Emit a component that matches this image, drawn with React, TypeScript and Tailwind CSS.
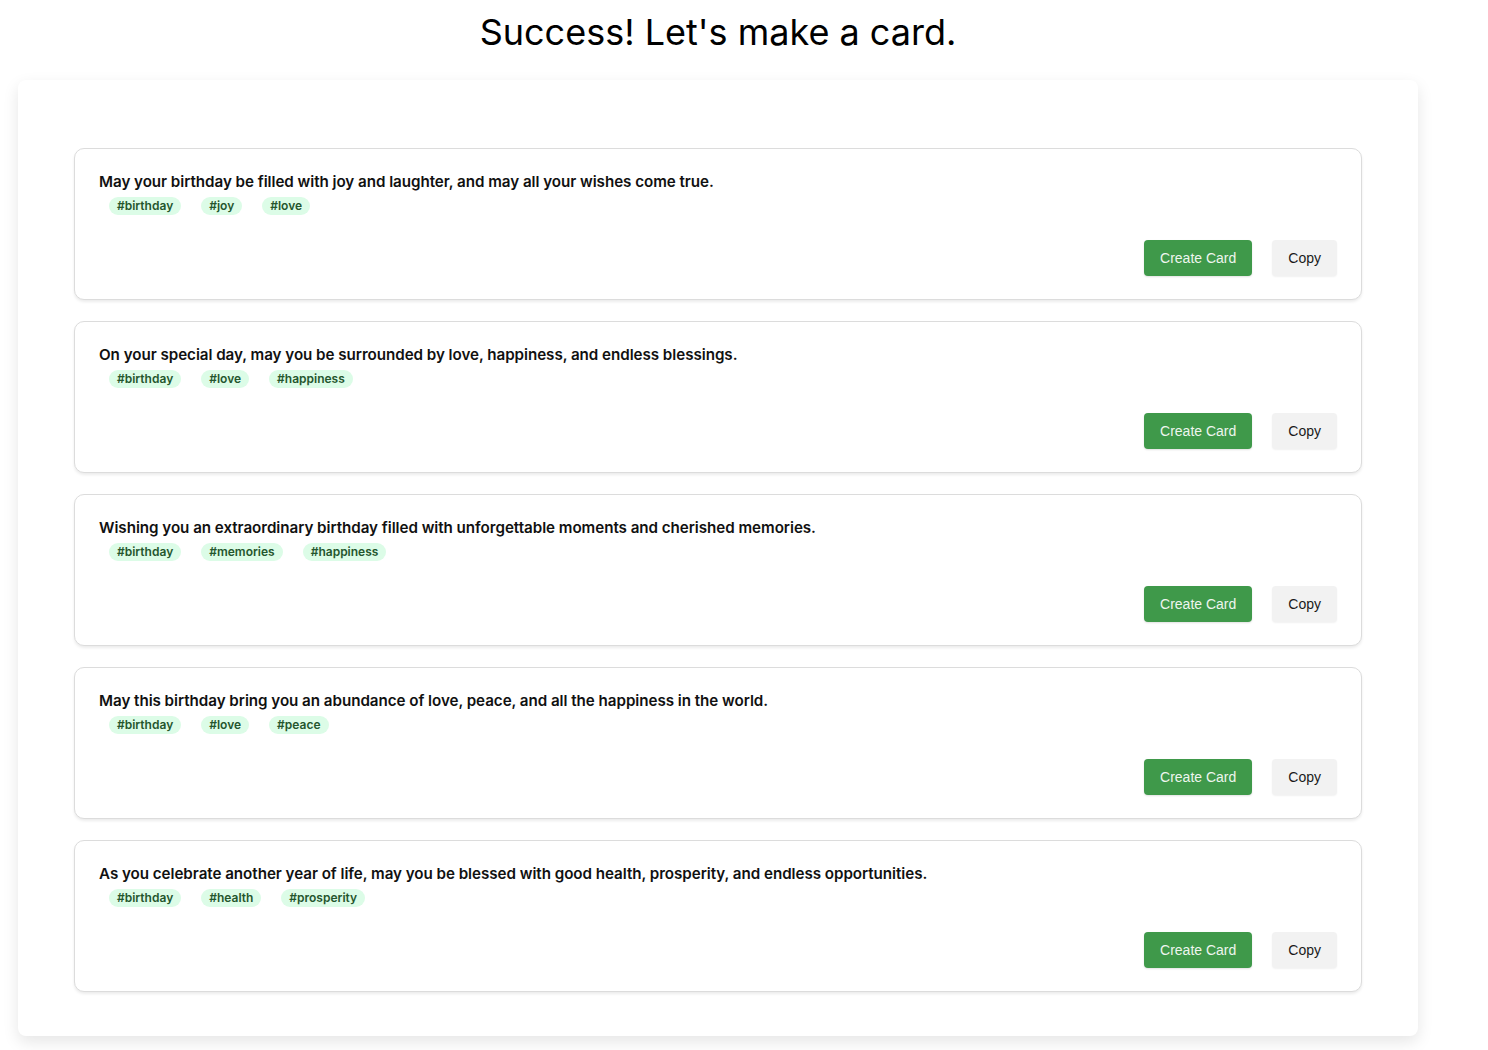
import React from 'react';

type Wish = { text: string; tags: string[] };

const wishes: Wish[] = [
  { text: 'May your birthday be filled with joy and laughter, and may all your wishes come true.', tags: ['birthday', 'joy', 'love'] },
  { text: 'On your special day, may you be surrounded by love, happiness, and endless blessings.', tags: ['birthday', 'love', 'happiness'] },
  { text: 'Wishing you an extraordinary birthday filled with unforgettable moments and cherished memories.', tags: ['birthday', 'memories', 'happiness'] },
  { text: 'May this birthday bring you an abundance of love, peace, and all the happiness in the world.', tags: ['birthday', 'love', 'peace'] },
  { text: 'As you celebrate another year of life, may you be blessed with good health, prosperity, and endless opportunities.', tags: ['birthday', 'health', 'prosperity'] },
];

const WishCard: React.FC<{ wish: Wish }> = ({ wish }) => (
  <div className="rounded-[10px] border border-[#dcdcdc] bg-white px-6 pt-[21px] pb-[23px] shadow-[0_2px_3px_rgba(0,0,0,0.08)]">
    <p className="text-[15.2px] leading-6 font-semibold tracking-[-0.05px] text-[#111]">{wish.text}</p>
    {/* タグ */}
    <div className="mt-[3px] flex">
      {wish.tags.map((tag) => (
        <span
          key={tag}
          className="mx-2.5 rounded-full bg-[#dcfce7] px-2 py-px text-xs leading-4 font-semibold text-[#25562e]"
        >
          #{tag}
        </span>
      ))}
    </div>
    <div className="mt-[25px] flex justify-end gap-5 font-['Liberation_Sans',Arial,sans-serif]">
      <button className="h-9 rounded bg-[#3f994a] px-4 text-sm text-[#eef5ee] shadow-[0_1px_2px_rgba(0,0,0,0.12)]">
        Create Card
      </button>
      <button className="h-9 rounded bg-[#f2f2f2] px-4 text-sm text-[#1a1a1a] shadow-[0_1px_2px_rgba(0,0,0,0.06)]">
        Copy
      </button>
    </div>
  </div>
);

export default function App() {
  return (
    <div className="min-h-[1050px] bg-white font-['Inter','Noto_Sans',sans-serif]">
      <div className="ml-[18px] w-[1400px]">
        <h1 className="pt-3 text-center text-[36px] leading-10 font-normal text-black">
          Success! Let's make a card.
        </h1>
        <div className="mt-7 rounded-lg bg-white px-14 pt-[68px] pb-[44px] shadow-[0_6px_16px_rgba(0,0,0,0.1)]">
          <div className="flex flex-col gap-[21px]">
            {wishes.map((w, i) => (
              <WishCard key={i} wish={w} />
            ))}
          </div>
        </div>
      </div>
    </div>
  );
}
